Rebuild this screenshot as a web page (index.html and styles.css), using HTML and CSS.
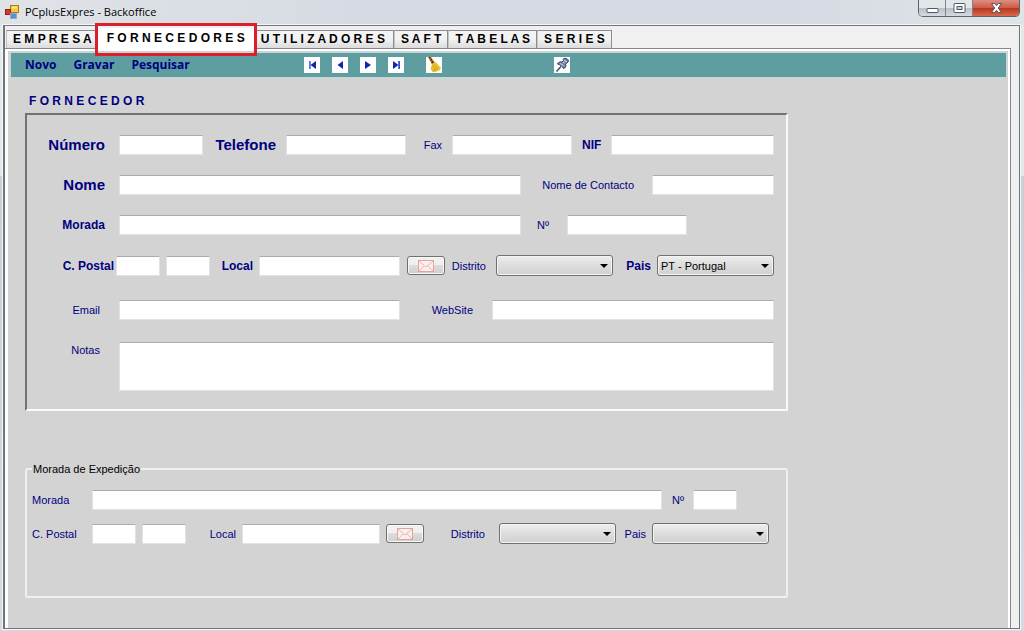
FILE: index.html
```html
<!DOCTYPE html>
<html lang="pt">
<head>
<meta charset="utf-8">
<title>PCplusExpres - Backoffice</title>
<link rel="stylesheet" href="styles.css">
</head>
<body>
<div class="window">
  <header class="titlebar">
    <svg class="app-icon" width="14" height="14" viewBox="0 0 14 14" aria-hidden="true">
      <rect x="5.500" y="0.500" width="8" height="7" fill="#f3c93c" stroke="#a77d1d"/>
      <rect x="0.500" y="4.500" width="5" height="5" fill="#d43a35" stroke="#942019"/>
      <rect x="5.500" y="8.500" width="6" height="5" fill="#5a8fdc" stroke="#8fa9cf"/>
      <rect x="7" y="1.500" width="5" height="2" fill="#fbe58b"/>
    </svg>
    <h1 class="title">PCplusExpres - Backoffice</h1>
    <div class="controls">
      <button class="control" type="button" aria-label="Minimizar">
        <svg width="13" height="14" viewBox="0 0 13 14"><rect x="1" y="7.500" width="11" height="4" rx="0.500" fill="#fff" stroke="#535666"/></svg>
      </button>
      <button class="control" type="button" aria-label="Maximizar">
        <svg width="13" height="14" viewBox="0 0 13 14"><rect x="1" y="2.500" width="11" height="9" rx="0.500" fill="#fff" stroke="#535666"/><rect x="4" y="5.500" width="5" height="3" fill="#cdd2d8" stroke="#535666"/></svg>
      </button>
      <button class="control close" type="button" aria-label="Fechar">
        <svg width="13" height="14" viewBox="0 0 13 14"><path d="M1.500 2.500h3.200L6.500 4.700l1.800-2.200h3.200L8.300 7l3.200 4.500H8.300L6.500 9.300l-1.800 2.200H1.500L4.700 7z" fill="#fff" stroke="#535666"/></svg>
      </button>
    </div>
  </header>

  <main class="client">
    <nav class="tabs" role="tablist">
      <button class="tab" type="button" role="tab">E M P R E S A</button>
      <button class="tab active" type="button" role="tab" aria-selected="true">F O R N E C E D O R E S</button>
      <button class="tab wide" type="button" role="tab">U T I L I Z A D O R E S</button>
      <button class="tab" type="button" role="tab">S A F T</button>
      <button class="tab" type="button" role="tab">T A B E L A S</button>
      <button class="tab" type="button" role="tab">S E R I E S</button>
    </nav>

    <section class="page">
      <div class="toolbar">
        <div class="menu">
          <button class="menu-item" type="button">Novo</button>
          <button class="menu-item" type="button">Gravar</button>
          <button class="menu-item" type="button">Pesquisar</button>
        </div>
        <div class="nav">
          <button class="tool" type="button" aria-label="Primeiro"><svg width="16" height="16" viewBox="0 0 16 16"><path d="M5 4h1.800v8H5z" fill="#5674d8"/><path d="M12 4v8L6.500 8z" fill="#1226a8"/></svg></button>
          <button class="tool" type="button" aria-label="Anterior"><svg width="16" height="16" viewBox="0 0 16 16"><path d="M11 4v8L5.500 8z" fill="#1226a8"/></svg></button>
          <button class="tool" type="button" aria-label="Seguinte"><svg width="16" height="16" viewBox="0 0 16 16"><path d="M5 4v8l6-4z" fill="#1226a8"/></svg></button>
          <button class="tool" type="button" aria-label="Último"><svg width="16" height="16" viewBox="0 0 16 16"><path d="M5 4v8l5.500-4z" fill="#1226a8"/><path d="M10.200 4H12v8h-1.800z" fill="#3553c4"/></svg></button>
        </div>
        <button class="tool" type="button" aria-label="Limpar"><svg width="16" height="16" viewBox="0 0 16 16"><path d="M2 0h3l4 6-2.500 2z" fill="#b6702c"/><path d="M3 1l1.500-.5M4.500 3.500L6 2.500M5.500 6l2-1.500" stroke="#432412" stroke-width="1.300"/><path d="M6 7l3.500-2.300L15 11l-1 2-4.500 2H6.500L4.500 12z" fill="#edc62d"/><path d="M7 8l1.500 6M9 7.500l2.500 6M6.500 14l6-3.500" fill="none" stroke="#c2951f" stroke-width="0.700"/></svg></button>
        <button class="tool pin" type="button" aria-label="Fixar"><svg width="16" height="16" viewBox="0 0 16 16"><path d="M7 9.500L2.500 14.500" stroke="#394152" stroke-width="1.300"/><path d="M3.500 7c1-2 3-2.500 4.500-2L9.500 3.500C8.500 2 10 1 12 1.500s3 2 2 3.500l-2.500 2c1 2 0 4-2 4.500C9 9.500 6 7.500 3.500 7z" fill="#7588ae" stroke="#303c5a"/><path d="M10 3.500l3 1.500M6 6.500l3.500 2M9 5l1 1" stroke="#cfdaf0"/></svg></button>
      </div>

      <form class="supplier">
        <h2 class="heading">F O R N E C E D O R</h2>
        <div class="panel">
          <div class="row row-number">
            <label class="label first large" for="numero">Número</label><input class="field" id="numero" type="text">
            <label class="label large" for="telefone">Telefone</label><input class="field" id="telefone" type="text">
            <label class="label" for="fax">Fax</label><input class="field" id="fax" type="text">
            <label class="label strong" for="nif">NIF</label><input class="field" id="nif" type="text">
          </div>
          <div class="row row-name">
            <label class="label first large" for="nome">Nome</label><input class="field" id="nome" type="text">
            <label class="label spaced" for="contacto">Nome de Contacto</label><input class="field" id="contacto" type="text">
          </div>
          <div class="row row-address">
            <label class="label first strong" for="morada">Morada</label><input class="field" id="morada" type="text">
            <label class="label spaced" for="porta">Nº</label><input class="field" id="porta" type="text">
          </div>
          <div class="row row-postal">
            <div class="postal"><label class="label strong" for="cp">C. Postal</label><input class="field" id="cp" type="text"></div>
            <input class="field" type="text" aria-label="C. Postal, extensão">
            <label class="label strong" for="local">Local</label><input class="field" id="local" type="text">
            <button class="mail" type="button" aria-label="Procurar código postal"><svg width="16" height="12" viewBox="0 0 16 12"><rect x="0.500" y="0.500" width="15" height="11" fill="#fbefed" stroke="#e3a49e"/><path d="M1 1l7 6 7-6M1 11l5-5M15 11l-5-5" fill="none" stroke="#e9b5ae"/></svg></button>
            <label class="label near" for="distrito">Distrito</label><select class="combo" id="distrito"><option></option></select>
            <label class="label strong" for="pais">Pais</label><select class="combo" id="pais"><option>PT - Portugal</option></select>
          </div>
          <div class="row row-web">
            <label class="label first inset" for="email">Email</label><input class="field" id="email" type="text">
            <label class="label inset" for="website">WebSite</label><input class="field" id="website" type="text">
          </div>
          <div class="row row-notes">
            <label class="label first inset" for="notas">Notas</label><textarea class="field notes" id="notas"></textarea>
          </div>
        </div>

        <fieldset class="shipping">
          <legend>Morada de Expedição</legend>
          <div class="row row-ship-address">
            <label class="label start" for="s-morada">Morada</label><input class="field" id="s-morada" type="text">
            <label class="label" for="s-porta">Nº</label><input class="field" id="s-porta" type="text">
          </div>
          <div class="row row-ship-postal">
            <label class="label start" for="s-cp">C. Postal</label><input class="field" id="s-cp" type="text">
            <input class="field" type="text" aria-label="C. Postal, extensão">
            <label class="label" for="s-local">Local</label><input class="field" id="s-local" type="text">
            <button class="mail" type="button" aria-label="Procurar código postal"><svg width="16" height="12" viewBox="0 0 16 12"><rect x="0.500" y="0.500" width="15" height="11" fill="#fbefed" stroke="#e3a49e"/><path d="M1 1l7 6 7-6M1 11l5-5M15 11l-5-5" fill="none" stroke="#e9b5ae"/></svg></button>
            <label class="label spaced" for="s-distrito">Distrito</label><select class="combo" id="s-distrito"><option></option></select>
            <label class="label" for="s-pais">Pais</label><select class="combo" id="s-pais"><option></option></select>
          </div>
        </fieldset>
      </form>
    </section>
  </main>
</div>
</body>
</html>
```
FILE: styles.css
```css
* { box-sizing: border-box; }

body {
  margin: 0;
  font: 11px/16px "Liberation Sans", Arial, sans-serif;
  color: #000;
}

button, input, select, textarea { font: inherit; color: inherit; margin: 0; }

.window {
  display: flex;
  flex-direction: column;
  min-height: 100vh;
  padding: 0 4px 2px 3px;
  background:
    linear-gradient(90deg, #dfe3e6, #d5dae3 40%, #d5dae3 75%, #dfe4e7) top / 100% 26px no-repeat,
    linear-gradient(#e4e9ec 175px, #c8d0d6 177px, #d5dae3);
}

/* Title bar */
.titlebar { display: flex; align-items: flex-start; height: 25px; padding-left: 2px; }
.app-icon { margin-top: 5px; }
.title {
  flex: 1;
  margin: 4px 0 0 6px;
  font: 11px/16px "Open Sans", "Noto Sans", sans-serif;
}
.controls {
  display: flex;
  border: 1px solid #5d6470;
  border-top: 0;
  border-radius: 0 0 5px 5px;
  overflow: hidden;
}
.control {
  display: flex;
  justify-content: center;
  align-items: center;
  width: 27px;
  height: 16px;
  padding: 0;
  border: 0;
  border-right: 1px solid #7d8490;
  background: linear-gradient(#e3e6e9 50%, #b9bfc6 50%, #d5dbe0);
}
.control.close {
  width: 46px;
  border-right: 0;
  background: linear-gradient(#dd8f80, #cd5a45 50%, #b9341c 50%, #d8694a);
}

/* Client area and tabs */
.client {
  flex: 1;
  display: flex;
  flex-direction: column;
  padding: 4px 8px 0 0;
  border: 1px solid #6f7679;
  border-left-width: 2px;
  outline: 1px solid #f4f6f7;
  background: #f0f0f0;
}
.tabs { display: flex; height: 18px; padding-left: 1px; }
.tab {
  position: relative;
  height: 18px;
  padding: 0 6px;
  border: 1px solid #8b8d91;
  border-bottom: 0;
  border-left-color: #c2c4c8;
  background: linear-gradient(#f3f3f3 45%, #dcdcdc);
  font: bold 12px/17px "Liberation Sans", Arial, sans-serif;
  white-space: nowrap;
}
.tab.wide { padding: 0 8px 0 5px; }
.tab.active {
  z-index: 1;
  height: 22px;
  margin: -2px 0 0 -2px;
  padding: 1px 10px 3px;
  border: 0;
  background: #fff;
}
.tab.active::after {
  content: "";
  position: absolute;
  inset: -5px -2px -6px;
  border: 3px solid #dc1f2b;
}

.page {
  flex: 1;
  padding: 2px 2px 0;
  border: 1px solid #85878d;
  border-width: 1px 1px 0 0;
  background: #d3d3d3;
  box-shadow: inset 3px 0 #fff, inset -2px 0 #fff, inset 0 2px #fff;
}

/* Toolbar */
.toolbar {
  display: flex;
  align-items: center;
  height: 24px;
  margin: 2px 2px 0 4px;
  padding-left: 14px;
  background: #5f9ea0;
  outline: 1px solid #c5d8d8;
}
.menu { display: flex; gap: 17px; width: 279px; }
.menu-item {
  padding: 0;
  border: 0;
  background: none;
  color: #000080;
  font: bold 12px/16px "Open Sans", "Noto Sans", sans-serif;
}
.nav { display: flex; gap: 12px; margin-right: 22px; }
.tool { display: flex; width: 16px; height: 16px; padding: 0; border: 0; background: #fff; }
.pin { margin-left: 112px; }

/* Supplier form */
.supplier { max-width: 785px; padding: 17px 4px 0 18px; }
.heading {
  margin: 0 4px 4px;
  color: #000080;
  font: bold 12px/15px "Liberation Sans", Arial, sans-serif;
}
.panel {
  display: flex;
  flex-direction: column;
  gap: 20px;
  padding: 20px 12px 18px 0;
  border: 2px solid;
  border-color: #727272 #fafafa #fafafa #727272;
}
.row { display: grid; align-items: center; column-gap: 10px; min-height: 20px; }
.row-number { grid-template-columns: 82px 84fr 63px 120fr 26px 120fr 19px 163fr; }
.row-name { grid-template-columns: 82px 402fr 111px 122fr; }
.row-address { grid-template-columns: 82px 402px 26px 120px; }
.row-postal { grid-template-columns: 133px 44px 37px 1fr 39px 39px 117px 32px 117px; column-gap: 6px; }
.row-web { grid-template-columns: 82px 281fr 72px 282fr; margin-top: 4px; }
.row-notes { grid-template-columns: 82px 1fr; align-items: start; margin-top: 2px; }
.row-ship-address { grid-template-columns: 50px 570px 11px 44px; }
.row-ship-postal { grid-template-columns: 54px 44px 44px 44px 138px 38px 63px 117px 24px 117px; column-gap: 6px; }

.label { color: #000080; text-align: right; white-space: nowrap; }
.strong { font: bold 12px/16px "Liberation Sans", Arial, sans-serif; }
.large { font: bold 15px/18px "Liberation Sans", Arial, sans-serif; }
.first { padding-right: 4px; }
.inset { padding-right: 9px; }
.near { padding-right: 4px; }
.spaced { padding-right: 8px; }
.start { text-align: left; }
.postal { display: grid; grid-template-columns: 87px 44px; column-gap: 2px; align-items: center; }

.field {
  width: 100%;
  min-width: 0;
  height: 20px;
  padding: 1px 3px;
  border: 1px solid #e2e2e2;
  border-top-color: #ababab;
  border-radius: 0;
  background: #fff;
}
.notes { display: block; height: 49px; resize: none; }

.mail {
  display: flex;
  justify-content: center;
  align-items: center;
  justify-self: end;
  width: 38px;
  height: 19px;
  padding: 0;
  border: 1px solid #707070;
  border-radius: 3px;
  box-shadow: inset 0 0 0 1px #f8f8f8;
  background: linear-gradient(#f0f0f0 48%, #dcdcdc 50%, #cfcfcf);
}
.combo {
  appearance: none;
  width: 100%;
  height: 21px;
  padding: 0 20px 0 3px;
  border: 1px solid #707070;
  border-radius: 3px;
  box-shadow: inset 0 0 0 1px #f4f4f4;
  background:
    url("data:image/svg+xml,%3Csvg xmlns='http://www.w3.org/2000/svg' width='8' height='4'%3E%3Cpath d='M0 0h8L4 4z'/%3E%3C/svg%3E") right 4px center no-repeat,
    linear-gradient(#eeeeee, #dddddd 50%, #d0d0d0);
}

.shipping {
  display: flex;
  flex-direction: column;
  gap: 13px;
  min-width: 0;
  margin: 51px 0 0;
  padding: 14px 5px 52px;
  border: 2px solid #efefef;
  border-radius: 3px;
}
.shipping legend { padding: 0 1px; line-height: 14px; }
```
